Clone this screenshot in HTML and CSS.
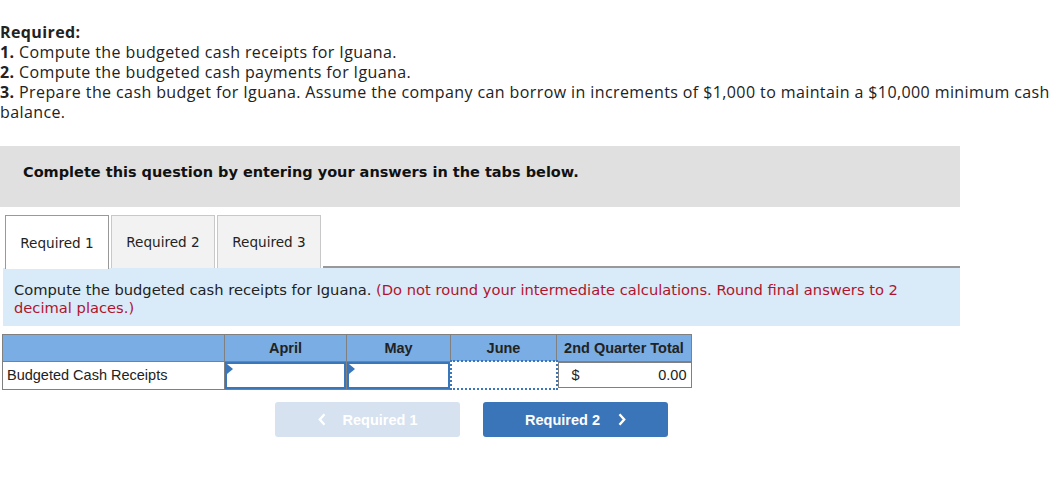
FILE: index.html
```html
<!DOCTYPE html>
<html>
<head>
<meta charset="utf-8">
<link rel="stylesheet" href="styles.css">
</head>
<body>
<div class="req">
  <div class="req-title">Required:</div>
  <div><b>1.</b> Compute the budgeted cash receipts for Iguana.</div>
  <div><b>2.</b> Compute the budgeted cash payments for Iguana.</div>
  <div><b>3.</b> Prepare the cash budget for Iguana. Assume the company can borrow in increments of $1,000 to maintain a $10,000 minimum cash balance.</div>
</div>

<div class="banner">Complete this question by entering your answers in the tabs below.</div>

<div class="tabs">
  <div class="tab active">Required 1</div>
  <div class="tab">Required 2</div>
  <div class="tab">Required 3</div>
  <div class="tab-fill"></div>
</div>

<div class="instr">Compute the budgeted cash receipts for Iguana. <span class="red">(Do not round your intermediate calculations. Round final answers to 2 decimal places.)</span></div>

<table class="grid">
  <tr class="head">
    <th class="c-label"></th>
    <th class="c-apr">April</th>
    <th class="c-may">May</th>
    <th class="c-jun">June</th>
    <th class="c-tot">2nd Quarter Total</th>
  </tr>
  <tr>
    <td class="label">Budgeted Cash Receipts</td>
    <td class="input"><div class="box"></div></td>
    <td class="input"><div class="box"></div></td>
    <td class="dotted"></td>
    <td class="total"><span>$</span><span>0.00</span></td>
  </tr>
</table>

<div class="nav">
  <div class="btn prev"><svg class="chev l" width="8" height="13" viewBox="0 0 8 13"><path d="M6.5 1.2 L1.8 6.5 L6.5 11.8" fill="none" stroke="#fff" stroke-width="2.4"/></svg>Required 1</div>
  <div class="btn next">Required 2<svg class="chev r" width="8" height="13" viewBox="0 0 8 13"><path d="M1.5 1.2 L6.2 6.5 L1.5 11.8" fill="none" stroke="#fff" stroke-width="2.4"/></svg></div>
</div>
</body>
</html>
```

FILE: styles.css
```css
html, body { margin: 0; padding: 0; background: #fff; }
body { width: 1050px; }

.req {
  font-family: "Open Sans", Lato, sans-serif;
  font-size: 16px;
  letter-spacing: 0.4px;
  line-height: 20px;
  color: #222;
  padding-top: 22px;
}
.req b, .req-title { font-weight: bold; }

.banner {
  margin-top: 24px;
  width: 937px;
  height: 61px;
  box-sizing: border-box;
  width: 960px;
  background: #e0e0e0;
  padding: 0 0 10px 23px;
  font-family: "DejaVu Sans", Verdana, sans-serif;
  font-weight: bold;
  font-size: 14.5px;
  display: flex;
  align-items: center;
  color: #111;
}

.tabs {
  display: flex;
  margin-top: 8px;
  padding-left: 5px;
  width: 955px;
  height: 53px;
}
.tab {
  width: 102px;
  height: 52px;
  border: 1px solid #c8c8c8;
  border-bottom: none;
  background: #f2f2f2;
  font-family: "DejaVu Sans", Verdana, sans-serif;
  font-size: 13.6px;
  color: #222;
  display: flex;
  align-items: center;
  justify-content: center;
  margin-right: 2px;
}
.tab.active {
  background: #fff;
  border: 1px solid #999;
  border-bottom: none;
  height: 53px;
}
.tab-fill {
  flex: 1;
  border-bottom: 2px solid #999;
  height: 51px;
}

.instr {
  margin-left: 3px;
  width: 957px;
  background: #d9ebf9;
  font-family: "DejaVu Sans", Verdana, sans-serif;
  font-size: 14.7px;
  line-height: 18px;
  color: #222;
  padding: 13px 10px 10px 11px;
  box-sizing: border-box;
  height: 58px;
}
.red { color: #b0142c; }

.grid {
  margin-top: 8px;
  margin-left: 2px;
  border-collapse: collapse;
  font-family: "Liberation Sans", Arial, sans-serif;
  font-size: 14.5px;
  color: #222;
}
.grid th, .grid td { padding: 0; border: 1px solid #808080; }
.grid .head th {
  background: #7aade3;
  height: 25px;
  font-weight: bold;
  text-align: center;
}
.c-label { width: 221px; }
.c-apr { width: 121px; }
.c-may { width: 103px; }
.c-jun { width: 105px; }
.c-tot { width: 134px; }
.grid td { height: 26px; }
.label { padding-left: 4px !important; text-align: left; }
.input { position: relative; }
.input .box {
  position: absolute;
  inset: 0;
  border: 2px solid #3a76ba;
  background: #fff;
}
.input .box::before {
  content: "";
  position: absolute;
  left: 0;
  top: 0;
  border-top: 5px solid transparent;
  border-bottom: 5px solid transparent;
  border-left: 6px solid #3a76ba;
}
.grid td.dotted { border: 2px dotted #3a76ba; }
.total {
  display: flex;
  justify-content: space-between;
  padding: 0 4px 0 13px !important;
  align-items: center;
  height: 26px !important;
  box-sizing: border-box;
}

.nav {
  display: flex;
  gap: 23px;
  margin-top: 12px;
  padding-left: 275px;
}
.btn {
  width: 185px;
  height: 35px;
  border-radius: 3px;
  display: flex;
  align-items: center;
  justify-content: center;
  font-family: "Liberation Sans", Arial, sans-serif;
  font-weight: bold;
  font-size: 14.5px;
  color: #fff;
}
.prev { background: #d6e2f0; }
.next { background: #3a75b9; }
.chev.l { margin-right: 17px; }
.chev.r { margin-left: 18px; }
```
